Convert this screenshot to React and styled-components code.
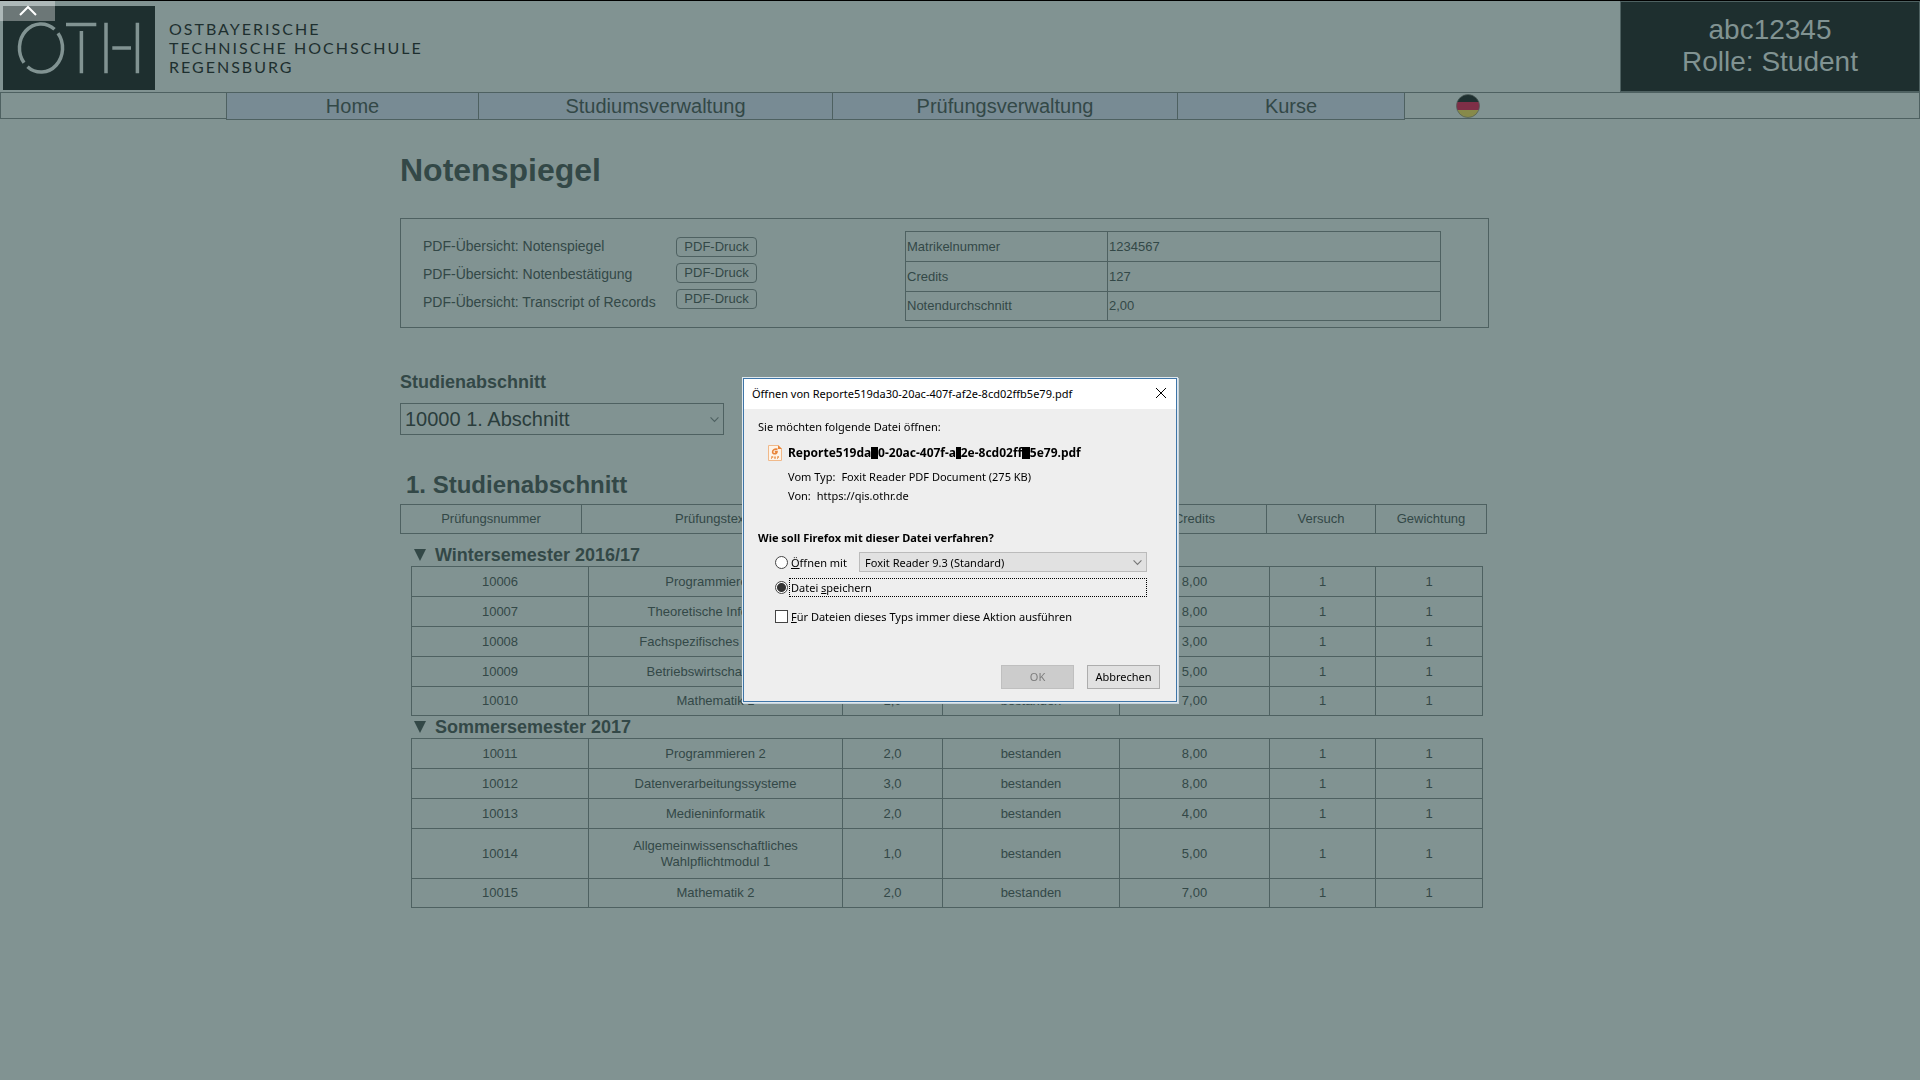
import React from "react";
import styled, { createGlobalStyle } from "styled-components";

const c = {
  page: "#819392",
  line: "#4e6161",
  text: "#334847",
  dark: "#1e2f2f",
  tab: "#788b94",
};

const Global = createGlobalStyle`
  * { box-sizing: border-box; }
  body {
    margin: 0;
    background: ${c.page};
    color: ${c.text};
    font-family: "Liberation Sans", Arial, sans-serif;
    font-size: 13px;
  }
  h1, h2, h3, p { margin: 0; }
`;

const Page = styled.div`
  min-height: 100vh;
  border-top: 1px solid #000;
`;

const Header = styled.header`
  display: flex;
  justify-content: space-between;
  height: 91px;
`;

const Brand = styled.a`
  display: flex;
  gap: 14px;
  padding: 5px 0 0 3px;
  color: ${c.dark};
  text-decoration: none;
`;

const BrandName = styled.span`
  padding-top: 13px;
  font: 16px/19px Lato, sans-serif;
  letter-spacing: 2px;
  white-space: pre-line;
`;

const Role = styled.div`
  width: 300px;
  padding-top: 12px;
  border: 1px solid ${c.line};
  background: ${c.dark};
  color: ${c.page};
  font-size: 28px;
  line-height: 32px;
  text-align: center;
`;

const Toggle = styled.button`
  position: absolute;
  top: 1px;
  left: 0;
  width: 55px;
  height: 20px;
  padding: 0;
  border: 0;
  background: rgba(255, 255, 255, 0.35);
`;

const Nav = styled.nav`
  display: grid;
  grid-template-columns: 226fr 252fr 354fr 345fr 228fr 515fr;
  align-items: start;
`;

const NavSpace = styled.div`
  display: flex;
  height: 27px;
  padding-left: 51px;
  border: 1px solid ${c.line};
  border-width: ${(p) => (p.$last ? "1px 1px 1px 0" : "1px 0 1px 1px")};
`;

const Tab = styled.a`
  height: 28px;
  border: 1px solid ${c.line};
  border-right-width: ${(p) => (p.$last ? "1px" : "0")};
  background: ${c.tab};
  color: ${c.text};
  font-size: 20px;
  line-height: 26px;
  text-align: center;
  text-decoration: none;
`;

const LangButton = styled.button`
  width: 24px;
  height: 24px;
  margin-top: 1px;
  padding: 0;
  border: 0;
  background: none;
`;

const Main = styled.main`
  margin: 0 431px 0 400px;
  padding-top: 32px;
`;

const Title = styled.h1`
  font-size: 32px;
  line-height: 36px;
`;

const Summary = styled.section`
  display: flex;
  align-items: flex-start;
  height: 110px;
  margin-top: 30px;
  padding: 12px 47px 0 22px;
  border: 1px solid ${c.line};
`;

const PrintLabels = styled.div`
  display: flex;
  flex-direction: column;
  width: 253px;
  padding-top: 1px;
  font-size: 14px;
  line-height: 28px;
`;

const PrintButtons = styled.div`
  display: flex;
  flex-direction: column;
  gap: 6px;
  padding-top: 6px;
`;

const PrintButton = styled.button`
  width: 81px;
  height: 20px;
  padding: 0;
  border: 1px solid ${c.line};
  border-radius: 4px;
  background: none;
  color: ${c.text};
  font: 13px/18px "Liberation Sans", Arial, sans-serif;
`;

const DataTable = styled.table`
  width: 100%;
  table-layout: fixed;
  border: solid ${c.line};
  border-width: 0 1px 1px 0;
  border-spacing: 0;
  line-height: 16px;
  text-align: center;

  th, td {
    height: 30px;
    padding: 0 30px;
    border: solid ${c.line};
    border-width: 1px 0 0 1px;
    font-weight: 400;
  }
  tr:last-child > * { height: 29px; }
`;

const InfoTable = styled(DataTable)`
  width: 536px;
  margin-left: auto;
  text-align: left;
  th, td { padding: 0 1px; }
`;

const HeadTable = styled(DataTable)`
  width: calc(100% - 2px);
  th { padding: 0; }
`;

const Label = styled.label`
  display: block;
  margin-top: 43px;
  font-size: 18px;
  font-weight: 700;
  line-height: 22px;
`;

const SelectBox = styled.div`
  display: grid;
  grid-template-columns: 1fr 14px;
  align-items: center;
  width: 324px;
  margin-top: 10px;
  select { grid-area: 1 / 1 / 2 / 3; }
  svg { grid-area: 1 / 2; pointer-events: none; }
`;

const AppBox = styled(SelectBox)`
  width: 288px;
  margin: 0 0 0 auto;
`;

const SectionSelect = styled.select`
  appearance: none;
  height: 32px;
  padding: 0 4px;
  border: 1px solid ${c.line};
  border-radius: 0;
  background: none;
  color: #2a3d3c;
  font: 20px "Liberation Sans", Arial, sans-serif;
`;

const SectionTitle = styled.h2`
  margin-top: 36px;
  padding: 0 0 5px 6px;
  font-size: 24px;
  line-height: 28px;
`;

const Terms = styled.div`
  padding: 10px 6px 0 11px;
`;

const TermTitle = styled.h3`
  display: flex;
  align-items: center;
  gap: 9px;
  height: 22px;
  padding-left: 3px;
  font-size: 18px;
  line-height: 22px;
`;

const Overlay = styled.div`
  position: fixed;
  inset: 0;
  display: flex;
  align-items: center;
  justify-content: center;
`;

const Dialog = styled.div`
  width: 434px;
  border: 1px solid #3f76a8;
  background: #eee;
  box-shadow: 0 0 0 1px #dfe8ee, 1px 1px 0 1px #c6d3dc;
  color: #000;
  font: 11px/16px "Noto Sans", "Open Sans", sans-serif;
`;

const TitleBar = styled.div`
  display: flex;
  justify-content: space-between;
  height: 30px;
  padding: 7px 7px 0 8px;
  background: #fff;
`;

const CloseButton = styled.button`
  width: 16px;
  height: 16px;
  padding: 0;
  border: 0;
  background: none;
`;

const Content = styled.div`
  padding: 10px 16px 12px 14px;
`;

const FileRow = styled.div`
  display: flex;
  gap: 6px;
  margin-top: 10px;
  padding-left: 10px;
  font-size: 12px;
  font-weight: 700;
`;

const Mask = styled.span`
  display: inline-block;
  background: #000;
  color: #000;
  line-height: 12px;
`;

const Facts = styled.dl`
  display: flex;
  flex-direction: column;
  gap: 3px;
  margin: 8px 0 0 30px;
  div { display: flex; gap: 6px; }
  dd { margin: 0; }
`;

const Question = styled.p`
  margin-top: 26px;
  font-weight: 700;
`;

const Option = styled.div`
  display: flex;
  align-items: center;
  height: 20px;
  margin-top: ${(p) => p.$top};
  padding: 0 13px 0 17px;

  input {
    flex: none;
    appearance: none;
    width: 13px;
    height: 13px;
    margin: 0;
    border: 1px solid #444;
    background: #fff;
  }
  input[type="radio"] { border-radius: 50%; }
  input[type="radio"]:checked {
    background: radial-gradient(circle, #333 0 4px, #fff 5px);
  }
`;

const OptionLabel = styled.label`
  flex: ${(p) => (p.$wide ? "1" : "none")};
  height: 19px;
  margin-left: 1px;
  padding-left: 1px;
  border: 1px ${(p) => (p.$wide ? "dotted #000" : "solid transparent")};
  line-height: 17px;
`;

const AppSelect = styled.select`
  appearance: none;
  width: 100%;
  height: 20px;
  padding: 0 5px;
  border: 1px solid #bbb;
  border-radius: 0;
  background: #e1e1e1;
  color: #000;
  font: 11px "Noto Sans", "Open Sans", sans-serif;
`;

const Actions = styled.div`
  display: flex;
  justify-content: flex-end;
  gap: 13px;
  margin-top: 39px;
`;

const ActionButton = styled.button`
  width: 73px;
  height: 24px;
  padding: 0;
  border: 1px solid #adadad;
  background: #e1e1e1;
  color: #000;
  font: 11px/20px "Noto Sans", "Open Sans", sans-serif;
  &:disabled { border-color: #bfbfbf; background: #ccc; color: #7d7d7d; }
`;

const Logo = () => (
  <svg width="152" height="84" viewBox="0 0 152 84" aria-hidden="true">
    <rect width="152" height="84" fill={c.dark} />
    <g fill="none" stroke={c.page} strokeWidth="3.5">
      <path d="M21 56.7A21.5 24 0 0 1 51.5 23.3" />
      <path d="M55 27.3A21.5 24 0 0 1 24.5 60.7" />
      <path d="M63 18.4H93.3M78.4 25V67.3M103 16.7V67.3M109.3 42H128M134.4 16.7V67.3" />
    </g>
  </svg>
);

const Chevron = ({ size, color }) => (
  <svg width={size} height={size} viewBox="0 0 8 8" fill="none" stroke={color}>
    <path d="M.5 2.2L4 5.7L7.5 2.2" />
  </svg>
);

const Flag = () => (
  <svg width="24" height="24" viewBox="0 0 24 24">
    <clipPath id="disc"><circle cx="12" cy="12" r="11.5" /></clipPath>
    <g clipPath="url(#disc)">
      <rect width="24" height="8" fill="#1e3030" />
      <rect y="8" width="24" height="8" fill="#7e2f47" />
      <rect y="16" width="24" height="8" fill="#878a4a" />
    </g>
    <circle cx="12" cy="12" r="11.5" fill="none" stroke="#4e5c5a" strokeOpacity=".7" />
  </svg>
);

const PdfIcon = () => (
  <svg width="14" height="16" viewBox="0 0 14 16" aria-hidden="true">
    <path d="M.5.5H10L13.500 4V15.500H.5Z" fill="#fdf3e8" stroke="#f0b98a" />
    <path d="M10 0L14 4H10Z" fill="#e8853a" />
    <path d="M9.500 4.300C6.500 3.600 4.600 5 4.600 6.900C4.600 9.400 8.800 9.400 9 6.600H6.800" fill="none" stroke="#e8853a" strokeWidth="1.600" />
    <path d="M3.500 14V11.500H5V12.500H3.500M6.500 11.500V13.500H7.500V11.500M9.500 14V11.500H11M9.500 12.500H11" fill="none" stroke="#eda76c" />
  </svg>
);

const tabs = ["Home", "Studiumsverwaltung", "Prüfungsverwaltung", "Kurse"];
const prints = ["Notenspiegel", "Notenbestätigung", "Transcript of Records"];
const facts = [["Matrikelnummer", "1234567"], ["Credits", "127"], ["Notendurchschnitt", "2,00"]];
const heads = ["Prüfungsnummer", "Prüfungstext", "Note", "Status", "Credits", "Versuch", "Gewichtung"];
const headCols = [181, null, 100, 181, 144, 109, 111];
const termCols = [177, null, 100, 177, 150, 106, 107];
const terms = [
  {
    name: "Wintersemester 2016/17",
    rows: [
      ["10006", "Programmieren 1", "2,0", "8,00"],
      ["10007", "Theoretische Informatik", "2,0", "8,00"],
      ["10008", "Fachspezifisches Englisch", "1,0", "3,00"],
      ["10009", "Betriebswirtschaftslehre", "2,0", "5,00"],
      ["10010", "Mathematik 1", "1,0", "7,00"],
    ],
  },
  {
    name: "Sommersemester 2017",
    rows: [
      ["10011", "Programmieren 2", "2,0", "8,00"],
      ["10012", "Datenverarbeitungssysteme", "3,0", "8,00"],
      ["10013", "Medieninformatik", "2,0", "4,00"],
      ["10014", "Allgemeinwissenschaftliches Wahlpflichtmodul 1", "1,0", "5,00"],
      ["10015", "Mathematik 2", "2,0", "7,00"],
    ],
  },
];

const TallCell = styled.td`
  && { height: 50px; }
`;

const Cols = ({ widths }) => (
  <colgroup>
    {widths.map((w, i) => <col key={i} width={w || undefined} />)}
  </colgroup>
);

const Term = ({ name, rows }) => (
  <section>
    <TermTitle>
      <svg width="12" height="12" viewBox="0 0 12 12" aria-hidden="true">
        <path d="M0 0H12L6 12Z" fill={c.text} />
      </svg>
      {name}
    </TermTitle>
    <DataTable>
      <Cols widths={termCols} />
      <tbody>
        {rows.map(([id, text, grade, credits]) => (
          <tr key={id}>
            <td>{id}</td>
            {text.length > 30 ? <TallCell>{text}</TallCell> : <td>{text}</td>}
            <td>{grade}</td>
            <td>bestanden</td>
            <td>{credits}</td>
            <td>1</td>
            <td>1</td>
          </tr>
        ))}
      </tbody>
    </DataTable>
  </section>
);

const DownloadDialog = () => (
  <Overlay>
    <Dialog role="dialog" aria-labelledby="dialog-title">
      <TitleBar>
        <span id="dialog-title">Öffnen von Reporte519da30-20ac-407f-af2e-8cd02ffb5e79.pdf</span>
        <CloseButton aria-label="Schließen">
          <svg width="16" height="16" viewBox="0 0 16 16" stroke="#000">
            <path d="M3 2L13 12M13 2L3 12" />
          </svg>
        </CloseButton>
      </TitleBar>
      <Content>
        <p>Sie möchten folgende Datei öffnen:</p>
        <FileRow>
          <PdfIcon />
          <span>
            Reporte519da<Mask>3</Mask>0-20ac-407f-a<Mask>f</Mask>2e-8cd02ff<Mask>b</Mask>5e79.pdf
          </span>
        </FileRow>
        <Facts>
          <div><dt>Vom Typ:</dt><dd>Foxit Reader PDF Document (275 KB)</dd></div>
          <div><dt>Von:</dt><dd>https://qis.othr.de</dd></div>
        </Facts>
        <Question>Wie soll Firefox mit dieser Datei verfahren?</Question>
        <Option $top="6px">
          <input type="radio" name="action" id="open" />
          <OptionLabel htmlFor="open"><u>Ö</u>ffnen mit</OptionLabel>
          <AppBox>
            <AppSelect aria-label="Anwendung">
              <option>Foxit Reader 9.3 (Standard)</option>
            </AppSelect>
            <Chevron size="9" color="#777" />
          </AppBox>
        </Option>
        <Option $top="5px">
          <input type="radio" name="action" id="save" defaultChecked />
          <OptionLabel $wide htmlFor="save">Datei <u>s</u>peichern</OptionLabel>
        </Option>
        <Option $top="9px">
          <input type="checkbox" id="always" />
          <OptionLabel htmlFor="always"><u>F</u>ür Dateien dieses Typs immer diese Aktion ausführen</OptionLabel>
        </Option>
        <Actions>
          <ActionButton disabled>OK</ActionButton>
          <ActionButton>Abbrechen</ActionButton>
        </Actions>
      </Content>
    </Dialog>
  </Overlay>
);

export default function App() {
  return (
    <Page>
      <Global />
      <Header>
        <Brand href="#">
          <Logo />
          <BrandName>{"OSTBAYERISCHE\nTECHNISCHE HOCHSCHULE\nREGENSBURG"}</BrandName>
        </Brand>
        <Role>
          <div>abc12345</div>
          <div>Rolle: Student</div>
        </Role>
      </Header>
      <Toggle aria-label="Leiste einklappen">
        <svg width="55" height="20" viewBox="0 0 55 20" fill="none" stroke="#fff" strokeWidth="2">
          <path d="M20 14L28 6L36 14" />
        </svg>
      </Toggle>
      <Nav>
        <NavSpace />
        {tabs.map((t, i) => <Tab key={t} href="#" $last={i === 3}>{t}</Tab>)}
        <NavSpace $last>
          <LangButton aria-label="Deutsch"><Flag /></LangButton>
        </NavSpace>
      </Nav>
      <Main>
        <Title>Notenspiegel</Title>
        <Summary>
          <PrintLabels>
            {prints.map((p) => <span key={p}>PDF-Übersicht: {p}</span>)}
          </PrintLabels>
          <PrintButtons>
            {prints.map((p) => <PrintButton key={p}>PDF-Druck</PrintButton>)}
          </PrintButtons>
          <InfoTable>
            <Cols widths={[202, null]} />
            <tbody>
              {facts.map(([k, v]) => <tr key={k}><th>{k}</th><td>{v}</td></tr>)}
            </tbody>
          </InfoTable>
        </Summary>
        <Label htmlFor="section">Studienabschnitt</Label>
        <SelectBox>
          <SectionSelect id="section">
            <option>10000 1. Abschnitt</option>
          </SectionSelect>
          <Chevron size="9" color={c.line} />
        </SelectBox>
        <SectionTitle>1. Studienabschnitt</SectionTitle>
        <HeadTable>
          <Cols widths={headCols} />
          <thead>
            <tr>{heads.map((h) => <th key={h}>{h}</th>)}</tr>
          </thead>
        </HeadTable>
        <Terms>
          {terms.map((t) => <Term key={t.name} {...t} />)}
        </Terms>
      </Main>
      <DownloadDialog />
    </Page>
  );
}
